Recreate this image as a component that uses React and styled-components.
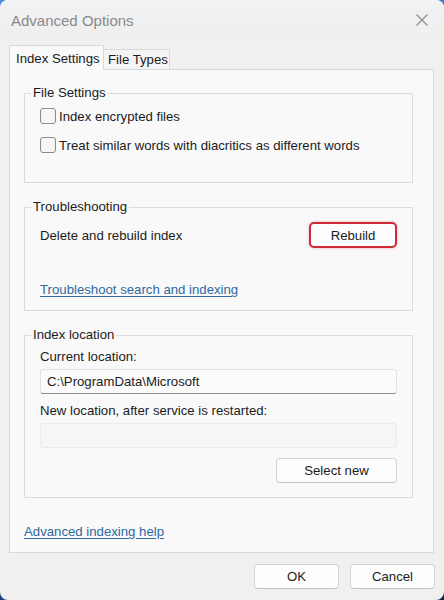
import React from "react";
import styled, { createGlobalStyle } from "styled-components";

const GlobalStyle = createGlobalStyle`
  html, body {
    margin: 0;
    padding: 0;
  }
  body {
    width: 444px;
    height: 600px;
    overflow: hidden;
    background: linear-gradient(160deg, #4d8fd8 0%, #2b63ad 55%, #0c2350 100%);
    font-family: "Liberation Sans", Arial, sans-serif;
    font-size: 13.2px;
    color: #1b1b1b;
  }
`;

const Window = styled.div`
  width: 444px;
  height: 600px;
  box-sizing: border-box;
  border-radius: 8px;
  overflow: hidden;
  background: #f0f0f0;
  display: flex;
  flex-direction: column;
`;

const TitleBar = styled.div`
  height: 40px;
  display: flex;
  align-items: center;
  justify-content: space-between;
  padding: 0 16px 0 11px;
  background: linear-gradient(#f2f3f5, #eeeeee);
`;

const Title = styled.span`
  font-size: 15px;
  color: #8a8a8a;
`;

const CloseButton = styled.div`
  width: 12px;
  height: 12px;
  display: flex;
  svg {
    display: block;
  }
`;

const TabStrip = styled.div`
  margin: 5px 0 -1px 9px;
  height: 25px;
  display: flex;
  align-items: flex-end;
  position: relative;
  z-index: 1;
`;

const Tab = styled.div`
  box-sizing: border-box;
  width: ${(p) => (p.$active ? "95px" : "66px")};
  height: ${(p) => (p.$active ? "25px" : "20px")};
  margin-bottom: ${(p) => (p.$active ? "0" : "1px")};
  padding-left: ${(p) => (p.$active ? "6px" : "4px")};
  display: flex;
  align-items: center;
  background: ${(p) => (p.$active ? "#f9f9f9" : "#f4f4f4")};
  border: 1px solid #d9d9d9;
  border-bottom: none;
  border-left: ${(p) => (p.$active ? "1px solid #d9d9d9" : "none")};
  white-space: nowrap;
`;

const Panel = styled.div`
  box-sizing: border-box;
  height: 484px;
  margin: 0 10px 0 9px;
  padding: 15px 20px 0 14px;
  background: #f9f9f9;
  border: 1px solid #d9d9d9;
  display: flex;
  flex-direction: column;
`;

const GroupBox = styled.fieldset`
  margin: ${(p) => (p.$first ? "0" : "16px")} 0 0 0;
  padding: 0 15px ${(p) => p.$bottom}px 15px;
  border: 1px solid #dcdcdc;
  min-width: 0;
  display: flex;
  flex-direction: column;
`;

const Legend = styled.legend`
  padding: 0 2px;
  margin-left: -9px;
  line-height: 16px;
`;

const CheckRow = styled.label`
  display: flex;
  align-items: center;
  gap: 3px;
  height: 20px;
  margin-top: ${(p) => p.$mt}px;
`;

const CheckBox = styled.span`
  box-sizing: border-box;
  width: 16px;
  height: 16px;
  border: 1px solid #8a8a8a;
  border-radius: 3px;
  background: #f6f6f6;
  flex: none;
`;

const ActionRow = styled.div`
  display: flex;
  align-items: center;
  justify-content: space-between;
  height: 26px;
  margin-top: 7px;
`;

const Button = styled.button`
  box-sizing: border-box;
  width: ${(p) => p.$width}px;
  height: ${(p) => p.$height || 25}px;
  padding: 0;
  font: inherit;
  color: #1b1b1b;
  background: #fdfdfd;
  border: 1px solid #d3d3d3;
  border-bottom-color: #c2c2c2;
  border-radius: 4px;
  cursor: default;
`;

const HighlightButton = styled(Button)`
  border: 2px solid #cf2a37;
  border-radius: 5px;
  background: #fefefe;
  box-shadow: 0 0 3px rgba(207, 42, 55, 0.35);
`;

const Link = styled.a`
  display: block;
  line-height: 16px;
  margin-top: ${(p) => p.$mt}px;
  color: #2f6aa0;
  text-decoration: underline;
  text-underline-offset: 2px;
  cursor: pointer;
  align-self: flex-start;
`;

const FieldLabel = styled.div`
  line-height: 16px;
  margin-top: ${(p) => p.$mt}px;
`;

const TextField = styled.div`
  box-sizing: border-box;
  height: 25px;
  margin-top: 4px;
  padding-left: 6px;
  display: flex;
  align-items: center;
  background: ${(p) => (p.$disabled ? "#f6f6f6" : "#fbfbfb")};
  border: 1px solid ${(p) => (p.$disabled ? "#ebebeb" : "#e3e3e3")};
  border-bottom-color: ${(p) => (p.$disabled ? "#ebebeb" : "#8c8c8c")};
  border-radius: 3px;
`;

const ButtonRow = styled.div`
  display: flex;
  justify-content: flex-end;
  gap: ${(p) => p.$gap || 0}px;
  margin-top: ${(p) => p.$mt || 0}px;
`;

const Footer = styled(ButtonRow)`
  flex: 1;
  padding: 11px 9px 0 0;
  gap: 11px;
  align-items: flex-start;
`;

export default function App() {
  return (
    <>
      <GlobalStyle />
      <Window>
        <TitleBar>
          <Title>Advanced Options</Title>
          <CloseButton>
            <svg width="12" height="12" viewBox="0 0 12 12">
              <path d="M0.5 0.5 L11.5 11.5 M11.5 0.5 L0.5 11.5" stroke="#8a8a8a" strokeWidth="1.1" fill="none" />
            </svg>
          </CloseButton>
        </TitleBar>

        <TabStrip>
          <Tab $active>Index Settings</Tab>
          <Tab>File Types</Tab>
        </TabStrip>

        <Panel>
          <GroupBox $first $bottom={27}>
            <Legend>File Settings</Legend>
            <CheckRow $mt={5}>
              <CheckBox />
              Index encrypted files
            </CheckRow>
            <CheckRow $mt={9}>
              <CheckBox />
              Treat similar words with diacritics as different words
            </CheckRow>
          </GroupBox>

          <GroupBox $bottom={12}>
            <Legend>Troubleshooting</Legend>
            <ActionRow>
              <span>Delete and rebuild index</span>
              <HighlightButton $width={88} $height={26}>Rebuild</HighlightButton>
            </ActionRow>
            <Link $mt={34}>Troubleshoot search and indexing</Link>
          </GroupBox>

          <GroupBox $bottom={14}>
            <Legend>Index location</Legend>
            <FieldLabel $mt={6}>Current location:</FieldLabel>
            <TextField>C:\ProgramData\Microsoft</TextField>
            <FieldLabel $mt={9}>New location, after service is restarted:</FieldLabel>
            <TextField $disabled />
            <ButtonRow $mt={10}>
              <Button $width={121}>Select new</Button>
            </ButtonRow>
          </GroupBox>

          <Link $mt={26}>Advanced indexing help</Link>
        </Panel>

        <Footer>
          <Button $width={85}>OK</Button>
          <Button $width={85}>Cancel</Button>
        </Footer>
      </Window>
    </>
  );
}
